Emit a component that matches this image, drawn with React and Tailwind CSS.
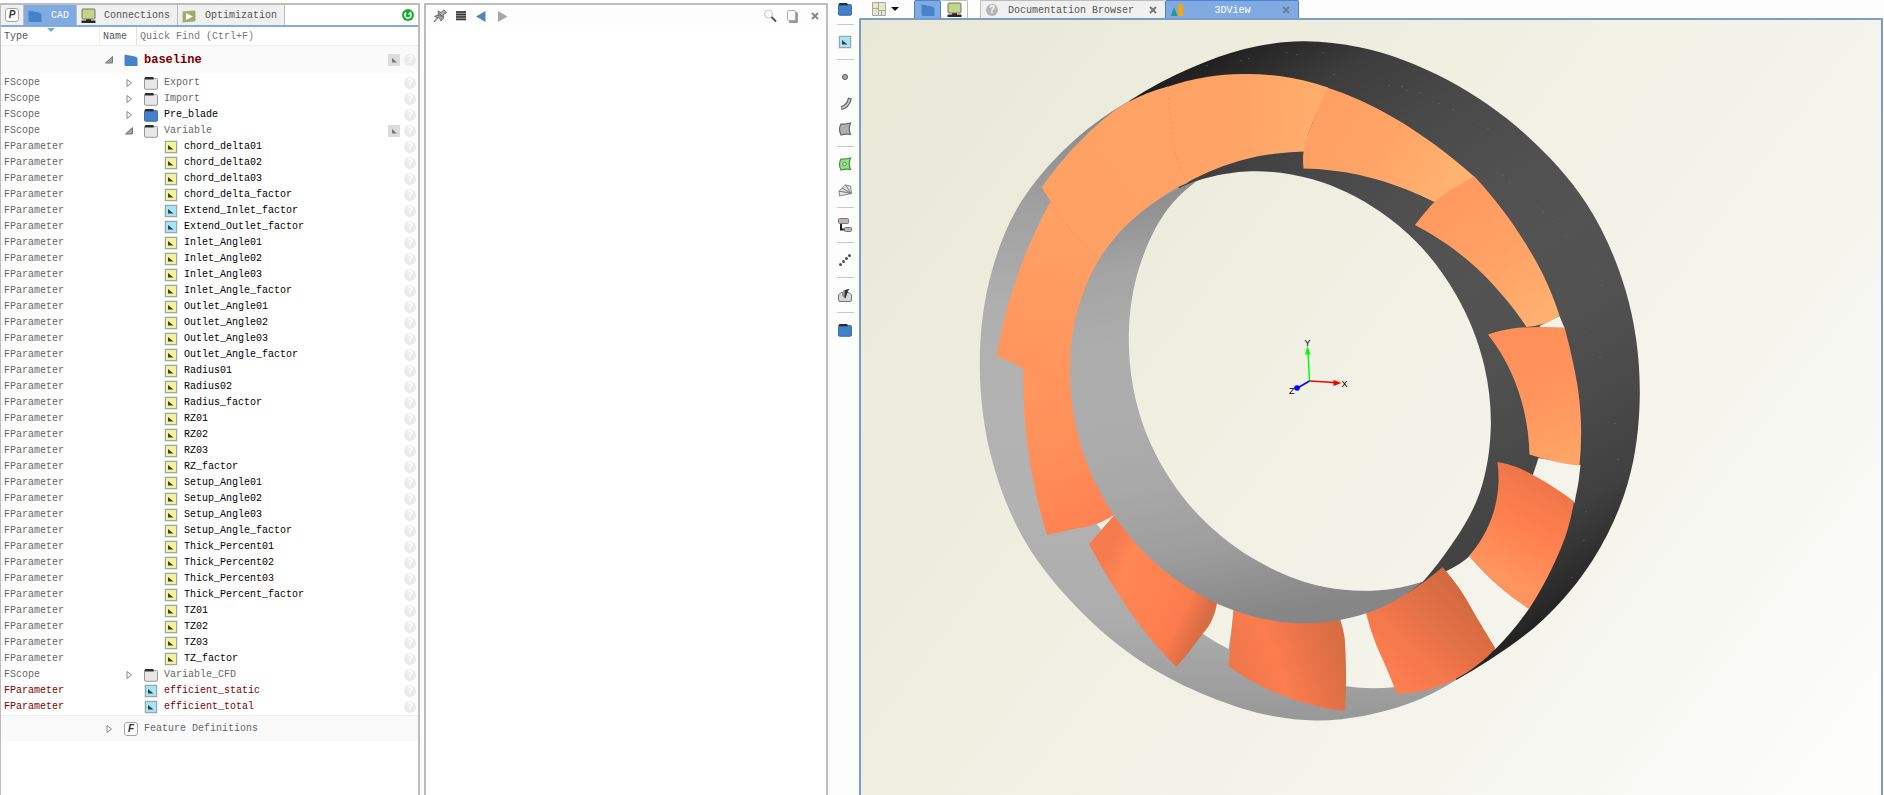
import React, { useState } from 'react'

const row = (name, level = 2, icon = 'yellow') => ({ type: 'FParameter', name, level, icon })
const scope = (name, icon = 'folder', open = false) => ({ type: 'FScope', name, level: 1, icon, open, arrow: true })

const rows = [
  scope('Export'),
  scope('Import'),
  scope('Pre_blade', 'blueFolder'),
  scope('Variable', 'folder', true),
  row('chord_delta01'),
  row('chord_delta02'),
  row('chord_delta03'),
  row('chord_delta_factor'),
  row('Extend_Inlet_factor', 2, 'blue'),
  row('Extend_Outlet_factor', 2, 'blue'),
  row('Inlet_Angle01'),
  row('Inlet_Angle02'),
  row('Inlet_Angle03'),
  row('Inlet_Angle_factor'),
  row('Outlet_Angle01'),
  row('Outlet_Angle02'),
  row('Outlet_Angle03'),
  row('Outlet_Angle_factor'),
  row('Radius01'),
  row('Radius02'),
  row('Radius_factor'),
  row('RZ01'),
  row('RZ02'),
  row('RZ03'),
  row('RZ_factor'),
  row('Setup_Angle01'),
  row('Setup_Angle02'),
  row('Setup_Angle03'),
  row('Setup_Angle_factor'),
  row('Thick_Percent01'),
  row('Thick_Percent02'),
  row('Thick_Percent03'),
  row('Thick_Percent_factor'),
  row('TZ01'),
  row('TZ02'),
  row('TZ03'),
  row('TZ_factor'),
  scope('Variable_CFD'),
  { ...row('efficient_static', 1, 'blue'), red: true },
  { ...row('efficient_total', 1, 'blue'), red: true },
]

/* ---------- icons ---------- */

const Svg = ({ size = 14, children }) => (
  <svg width={size} height={size} viewBox={`0 0 ${size} ${size}`} className="shrink-0" aria-hidden="true">{children}</svg>
)

const Letter = ({ letter }) => (
  <span className="flex h-[14px] w-[14px] shrink-0 items-center justify-center rounded-[3px] border border-[#a6a6a6] bg-white font-['Liberation_Sans'] text-[10px] font-bold italic leading-none text-[#333]">{letter}</span>
)

const CadIcon = () => (
  <Svg><path d="M0.5 1.5 L11 3.5 Q13.5 4 13.5 6 V13 H2 Q0.5 13 0.5 11.5Z" fill="#4682ca" /></Svg>
)

const Folder = ({ blue }) => (
  <Svg>
    <path d="M0.5 5 V2.5 L1.5 1 H9 L10.5 3 V5Z" fill="#2c2c2c" />
    <path d="M0.500 4.500 Q0.500 3.500 1.500 3.500 H9 L10.500 2.500 H12.500 Q13.500 2.500 13.500 3.500 V12 Q13.500 13.300 12 13.300 H2 Q0.500 13.300 0.500 12Z" fill={blue ? '#4380cb' : '#e8e8e8'} stroke={blue ? '#3768a5' : '#8c8c8c'} strokeWidth="0.900" />
  </Svg>
)

const Param = ({ color }) => (
  <Svg>
    <rect x="0" y="0" width="14" height="14" rx="1" fill="#e9e9e9" />
    <rect x="1.500" y="1.500" width="11" height="11" fill={color} stroke="#9aa8a4" />
    <path d="M4 5 L9.500 9.500 H4Z" fill="#3c3c3c" />
  </Svg>
)

const Monitor = () => (
  <Svg size={15}>
    <path d="M5 11 H10 V12.500 H14.500 V15 H0.500 V12.500 H5Z" fill="#2f2820" />
    <rect x="1" y="1" width="13" height="10" rx="1" fill="#c3d48c" stroke="#77785a" />
  </Svg>
)

const Play = () => (
  <Svg>
    <path d="M0.5 2.5 L12 1.5 Q13.5 1.5 13.5 3 V11 Q13.5 12.5 12 12.5 L0.5 13.5Z" fill="#a0ab6c" />
    <path d="M4 4 L11 7.5 L4 11Z" fill="#fff" />
  </Svg>
)

const Refresh = () => (
  <Svg size={12}>
    <circle cx="6" cy="6" r="6" fill="#12ad2b" />
    <path d="M4.200 3.600 A3 3 0 1 0 8.800 5.200" fill="none" stroke="#fff" strokeWidth="1.500" />
    <path d="M5.500 5.400 L9.800 5.600 L9 2.200Z" fill="#fff" />
  </Svg>
)

const Arrow = ({ open }) => (
  <Svg size={8}>
    {open
      ? <path d="M7.5 0.5 V7 H0.5Z" fill="#a0a0a0" stroke="#777" />
      : <path d="M2 0.5 L6.500 4 L2 7.5Z" fill="#fff" stroke="#888" />}
  </Svg>
)

const Help = () => (
  <span className="flex h-3 w-3 items-center justify-center rounded-full bg-[#ebebeb] font-['Liberation_Sans'] text-[10px] font-bold leading-none text-white">?</span>
)

const Mark = () => (
  <button type="button" aria-label="Options" className="flex h-3 w-3 items-center justify-center bg-[#dcdcdc]">
    <svg width="12" height="12" viewBox="0 0 12 12"><path d="M4 4 L9 8.5 H4Z" fill="#777" /></svg>
  </button>
)

const Cross = ({ color = '#777' }) => (
  <Svg size={8}><path d="M1 1 L7 7 M7 1 L1 7" stroke={color} strokeWidth="2" /></Svg>
)

const rowIcons = {
  folder: <Folder />,
  blueFolder: <Folder blue />,
  yellow: <Param color="#f4f59b" />,
  blue: <Param color="#a5e4fa" />,
}

/* ---------- object tree ---------- */

const treeTabs = [
  { label: 'CAD', icon: <CadIcon />, width: 'w-[53px]' },
  { label: 'Connections', icon: <Monitor />, width: 'w-[101px]' },
  { label: 'Optimization', icon: <Play />, width: 'w-[107px]' },
]

const TreeRow = ({ item }) => {
  const dim = item.icon === 'folder'
  return (
    <tr className="h-4">
      <td className={item.red ? 'pl-[3px] text-[#7d0000]' : 'pl-[3px] text-[#666]'}>{item.type}</td>
      <td>
        <div className={`flex h-4 items-center ${item.level === 2 ? 'pl-16' : 'pl-[25px]'}`}>
          {item.level === 1 && <span className="flex w-[19px] shrink-0">{item.arrow && <Arrow open={item.open} />}</span>}
          {rowIcons[item.icon]}
          <span className={`pl-[6px] ${item.red ? 'text-[#7d0000]' : dim ? 'text-[#666]' : 'text-black'}`}>{item.name}</span>
        </div>
      </td>
      <td>
        <div className="flex items-center justify-end gap-1 pr-[2px]">
          {item.open && <Mark />}
          <Help />
        </div>
      </td>
    </tr>
  )
}

const TreePanel = () => {
  const [find, setFind] = useState('')

  return (
    <section className="mt-[3px] flex w-[420px] shrink-0 flex-col border-2 border-b-0 border-l border-[#bdbdbd] bg-white">
      <nav className="flex h-[22px] items-stretch border-b-2 border-[#7fabe2]">
        <button type="button" aria-label="Project" className="flex w-[23px] items-center justify-center border-r border-[#bdbdbd] bg-[#f0f0f0]"><Letter letter="P" /></button>
        {treeTabs.map((tab, i) => (
          <button
            key={tab.label}
            type="button"
            className={`flex items-center justify-between border-r border-[#bdbdbd] pl-1 pr-[7px] pt-px ${tab.width} ${i === 0 ? 'bg-[#7fabe2] text-white' : 'bg-[#f0f0f0] text-[#555]'}`}
          >
            {tab.icon}
            {tab.label}
          </button>
        ))}
        <button type="button" aria-label="Refresh" className="ml-auto flex items-center pr-1"><Refresh /></button>
      </nav>

      <table className="w-full table-fixed border-separate border-spacing-0 text-left">
        <colgroup>
          <col className="w-[99px]" />
          <col />
          <col className="w-10" />
        </colgroup>
        <thead>
          <tr className="h-[19px]">
            <th className="relative border-b border-r border-[#ededed] pl-[3px] pt-px font-normal text-[#555]">
              Type
              <svg width="8" height="4" viewBox="0 0 8 4" className="absolute left-[46px] top-[1px]"><path d="M0 0 H8 L4 4Z" fill="#6cb0d8" /></svg>
            </th>
            <th colSpan="2" className="border-b border-[#ededed] font-normal text-[#555]">
              <div className="flex items-center">
                <span className="w-[37px] border-r border-[#e2e2e2] pl-[3px] pt-px leading-[17px]">Name</span>
                <input
                  type="search"
                  aria-label="Quick Find"
                  placeholder="Quick Find (Ctrl+F)"
                  className="min-w-0 flex-1 pl-[3px] pt-px outline-none placeholder:text-[#777]"
                  value={find}
                  onChange={(e) => setFind(e.target.value)}
                />
              </div>
            </th>
          </tr>
        </thead>
        <tbody>
          <tr className="h-[29px] [&>td]:border-b-2 [&>td]:border-white [&>td]:bg-[#fafafa]">
            <td></td>
            <td>
              <div className="flex items-center pl-[5px] pt-px">
                <span className="flex w-[19px] shrink-0"><Arrow open /></span>
                <CadIcon />
                <span className="pl-[6px] text-[12px] font-bold text-[#7d0000]">baseline</span>
              </div>
            </td>
            <td>
              <div className="flex items-center justify-end gap-1 pr-[2px] pt-px"><Mark /><Help /></div>
            </td>
          </tr>
          {rows.map((item) => <TreeRow key={item.name} item={item} />)}
          <tr className="h-[26px] [&>td]:border-t [&>td]:border-[#efefef] [&>td]:bg-[#fafafa]">
            <td></td>
            <td colSpan="2">
              <div className="flex items-center pl-[5px]">
                <span className="flex w-[19px] shrink-0"><Arrow /></span>
                <Letter letter="F" />
                <span className="pl-[6px] text-[#666]">Feature Definitions</span>
              </div>
            </td>
          </tr>
        </tbody>
      </table>
    </section>
  )
}

/* ---------- empty editor ---------- */

const EditorPanel = () => (
  <section className="ml-1 mt-[3px] w-[404px] shrink-0 border-2 border-b-0 border-[#bdbdbd] bg-white">
    <header className="flex h-[21px] items-center justify-between bg-[#fdfdfd] px-[7px]">
      <div className="flex items-center gap-2">
        <button type="button" aria-label="Pin">
          <Svg>
            <path d="M1 13 L5 8.5" stroke="#888" strokeWidth="1.5" />
            <path d="M5 2 L8 3.5 L11 0.8 L13.5 4 L10 5.8 L10.5 9 L8 12 L6.5 9 L1.5 7.5 L5.5 5.5Z" fill="#aaa" stroke="#666" strokeWidth="0.900" />
            <path d="M6 4.5 L10 8 M4.5 6.5 L9 7" stroke="#666" />
          </Svg>
        </button>
        <button type="button" aria-label="List">
          <Svg size={12}>
            <rect x="1" y="1" width="10" height="9" fill="#aaa" />
            <path d="M1 2 H11 M1 4.500 H11 M1 7 H11 M1 9.500 H11" stroke="#333" strokeWidth="1.500" />
          </Svg>
        </button>
        <button type="button" aria-label="Back"><Svg size={12}><path d="M10.5 1 V12 L1 6.5Z" fill="#5087b8" /></Svg></button>
        <button type="button" aria-label="Forward"><Svg size={14}><path d="M3 2 V13 L12.5 7.5Z" fill="#a8a8a8" /></Svg></button>
      </div>
      <div className="flex items-center gap-2">
        <button type="button" aria-label="Search">
          <Svg>
            <circle cx="5.500" cy="5" r="4" fill="#fafafa" stroke="#c4c4c4" />
            <path d="M8.500 8 L13 12.500" stroke="#555" strokeWidth="2" />
          </Svg>
        </button>
        <button type="button" aria-label="Copy">
          <Svg>
            <rect x="4" y="3" width="9" height="11" rx="1.5" fill="#999" />
            <rect x="2.5" y="1.5" width="8" height="10" rx="1.5" fill="#fff" stroke="#aaa" />
          </Svg>
        </button>
        <button type="button" aria-label="Close" className="pl-1"><Cross color="#888" /></button>
      </div>
    </header>
  </section>
)

/* ---------- vertical toolbar ---------- */

const toolGroups = [
  [['Parameter', <Param color="#a5e4fa" />]],
  [
    ['Point', <Svg><circle cx="7" cy="7" r="2.5" fill="#aaa" stroke="#555" /></Svg>],
    ['Curve', (
      <Svg>
        <path d="M3 12 Q10 11 12 2" fill="none" stroke="#666" strokeWidth="4" />
        <path d="M3.5 12 Q10 10.5 11.8 3" fill="none" stroke="#c4c4c4" strokeWidth="1.6" />
      </Svg>
    )],
    ['Surface', <Svg><path d="M3 2 Q8 2.500 12.500 1 Q10 7 12.500 12.500 Q8 11.500 3 13 Q0 7 3 2Z" fill="#b0b0b0" stroke="#666" strokeWidth="1.200" /></Svg>],
  ],
  [
    ['Image surface', (
      <Svg>
        <path d="M3 2 Q8 2.500 12.500 1 Q10 7 12.500 12.500 Q8 11.500 3 13 Q0 7 3 2Z" fill="#9edb8e" stroke="#38963a" strokeWidth="1.200" />
        <circle cx="6.500" cy="7" r="1.800" fill="#d8f3d2" stroke="#38963a" />
      </Svg>
    )],
    ['Solid', (
      <Svg>
        <path d="M1 8 L7.500 2 L12.500 3 L13.500 10.500 L1.500 13Z" fill="#e2e2e2" stroke="#888" />
        <path d="M1 8 L13 10.500 M4 5 L13 10.500 M7.500 2 L13 10.500" stroke="#777" />
      </Svg>
    )],
  ],
  [['Feature', (
    <Svg>
      <path d="M3 5 V11.5 H8" fill="none" stroke="#222" strokeWidth="2" />
      <rect x="0.5" y="0.5" width="10" height="5" rx="1" fill="#bdb5b5" stroke="#777" />
      <rect x="6.5" y="9.500" width="7" height="4" rx="1" fill="#bdb5b5" stroke="#777" />
    </Svg>
  )]],
  [['Points', (
    <Svg>
      <g fill="#505050">
        <circle cx="2.500" cy="11.5" r="1.500" /><circle cx="5.500" cy="8.500" r="1.500" /><circle cx="8.500" cy="5.500" r="1.500" /><circle cx="11.500" cy="2.500" r="1.500" />
      </g>
    </Svg>
  )]],
  [['Import', (
    <Svg>
      <path d="M0.5 7 L3 4.500 H11 L13.500 7 V12 Q13.500 13.500 12 13.500 H2 Q0.5 13.500 0.5 12Z" fill="#d6d6d6" stroke="#777" />
      <path d="M4 7 Q4 1 11.500 1 Q9 4 9 6 L7.500 10.500Z" fill="#333" />
      <path d="M4 7 Q4 2.500 7 2 L6.500 9Z" fill="#999" />
    </Svg>
  )]],
  [['Scope', <Folder blue />]],
]

const Toolbar = () => (
  <aside className="flex w-[31px] shrink-0 flex-col items-center bg-[#fdfdfd] pl-[3px]">
    <div className="flex h-6 w-[17px] justify-center pt-[2px]">
      <button type="button" aria-label="New scope" className="flex h-[14px]"><Folder blue /></button>
    </div>
    {toolGroups.map((group) => (
      <div key={group[0][0]} className="flex w-[17px] flex-col items-center border-t border-[#cacaca] py-1">
        {group.map(([label, icon]) => (
          <button key={label} type="button" aria-label={label} className="flex h-[26px] items-center">{icon}</button>
        ))}
      </div>
    ))}
  </aside>
)

/* ---------- 3D scene ---------- */

// Smooth line through the points, as cubic Beziers. Tangents are weighted by
// the distance between points, so uneven spacing does not make it wobble.
const curve = (p) => {
  const n = p.length - 1
  const len = []
  for (let i = 0; i < n; i++) len.push(Math.hypot(p[i + 1][0] - p[i][0], p[i + 1][1] - p[i][1]) || 1)
  const unit = (i, k) => (p[i + 1][k] - p[i][k]) / len[i]

  const t = p.map((_, i) => [0, 1].map((k) => {
    if (i === 0 || i === n) return 0
    return (unit(i - 1, k) * len[i] + unit(i, k) * len[i - 1]) / (len[i] + len[i - 1])
  }))
  const ends = n > 1
  t[0] = [0, 1].map((k) => (ends ? 2 * unit(0, k) - t[1][k] : unit(0, k)))
  t[n] = [0, 1].map((k) => (ends ? 2 * unit(n - 1, k) - t[n - 1][k] : unit(n - 1, k)))

  let d = ''
  for (let i = 0; i < n; i++) {
    const h = len[i] / 3
    const [a, b] = [p[i], p[i + 1]]
    d += `C${a[0] + t[i][0] * h} ${a[1] + t[i][1] * h} ${b[0] - t[i + 1][0] * h} ${b[1] - t[i + 1][1] * h} ${b[0]} ${b[1]}`
  }
  return d
}

// Closed shape made of smooth edges with corners between them
const shape = (...edges) => `M${edges[0][0]}` + edges.map((e) => `L${e[0]}` + curve(e)).join('') + 'Z'

const darkRim = [[1130, 100.7], [1193, 67.3], [1245, 49], [1303, 41.3], [1360, 47.3], [1446.7, 79.3], [1526.7, 135], [1586.7, 203.3], [1626, 290], [1640.3, 395], [1628.3, 483.3], [1593.3, 560], [1543.3, 620], [1490, 660], [1456.7, 680]]
const greyRim = [[1456.7, 680], [1410, 703.3], [1366, 715.5], [1316, 720.5], [1273, 716], [1210, 696.7], [1143.3, 662.5], [1076.7, 606.7], [1026.7, 543.3], [991.7, 456.7], [980.3, 368], [990, 280], [1016.7, 210], [1063.3, 151], [1130, 100.7]]
const hubRim = [[1196, 181], [1147, 208], [1100, 258.7], [1075, 323.3], [1071, 387], [1085, 456.7], [1133.3, 540], [1186.7, 586.7], [1233.3, 610], [1293.3, 623], [1340.7, 620], [1380, 608.3], [1423, 582]]
const holeDark = [[1197, 181], [1253.3, 171.3], [1313, 179.3], [1380, 211.3], [1416.7, 241.7], [1456.7, 295], [1485, 366.7], [1491.3, 427], [1480, 493.3], [1443.3, 557], [1423, 582]]
const holeGrey = [[1423, 582], [1393, 588.7], [1326.7, 587.3], [1253.3, 558.3], [1190, 505], [1146.7, 433.3], [1129.3, 340], [1140, 266.7], [1173, 203.3], [1197, 181]]

const gaps = [
  'M1540 326L1560 316L1565 328L1542 328Z',
  'M1539 458L1581 465L1579 482L1575 503L1533 476Z',
  'M1445 572Q1462 564 1470 556L1495 580L1530 608Q1514 631 1495 650L1466 600Z',
  'M1340 618L1368 612L1378 643L1396 687Q1370 690 1345 686L1345 653Z',
  'M1217 602L1235 609L1229 649Q1215 642 1202 633Z',
  'M1097 524L1116 514L1102 530Z',
]

const blades = [
  // left side, below the first overlap
  { fill: 'bladeJ', d: shape([[1024, 366], [1027, 437], [1035, 487], [1047.5, 535]], [[1047.5, 535], [1070, 530], [1098, 523.5], [1116, 514]], [[1116, 514], [1090, 384]]) },
  { fill: 'bladeK', d: shape([[1053, 198], [1032, 240], [1013, 290], [997, 356]], [[997, 356], [1023, 368], [1047, 380], [1071, 384]], [[1090, 384], [1112, 256]]) },
  // bottom
  { fill: 'bladeI', d: shape([[1115, 515], [1130, 500], [1217.5, 603]], [[1217.5, 603], [1211, 623], [1200, 638], [1177, 667]], [[1177, 667], [1140, 625], [1110, 580], [1089.5, 544]]) },
  { fill: 'bladeH', d: shape([[1234, 609], [1340.5, 619]], [[1340.5, 619], [1345, 637], [1346, 653], [1345.5, 711]], [[1345.5, 711], [1313, 705], [1277, 693], [1247, 678], [1229, 666]]) },
  { fill: 'bladeG', d: shape([[1443, 567], [1463, 593], [1477, 617], [1496, 648.5]], [[1496, 648.5], [1457, 678.5], [1427, 690], [1397.5, 694]], [[1397.5, 694], [1386.5, 667], [1376, 643], [1366.5, 613]], [[1366.5, 613], [1403, 596], [1443, 567]]) },
  // right side
  { fill: 'bladeF', d: shape([[1498, 462], [1517, 467], [1537, 477], [1574.5, 501.5]], [[1574.5, 501.5], [1568, 530], [1553, 567], [1529.5, 609]], [[1529.5, 609], [1500, 587], [1469.5, 556]], [[1469.5, 556], [1487, 530], [1497, 500], [1498, 462]]) },
  { fill: 'bladeE', d: shape([[1488.5, 334.5], [1510, 329], [1540, 327], [1565, 327.5]], [[1565, 327.5], [1573, 360], [1579, 393], [1581.5, 425], [1580, 465.5]], [[1580, 465.5], [1553, 461], [1530, 454.5]], [[1530, 454.5], [1521.7, 400], [1508, 365], [1488.5, 334.5]]) },
  { fill: 'bladeD', d: shape([[1474.5, 176], [1527, 245], [1547, 282], [1560, 315.5]], [[1560, 315.5], [1543, 324], [1527, 327]], [[1527, 327], [1507, 300], [1477, 268], [1447, 244], [1415.5, 225]], [[1415.5, 225], [1425, 213], [1437, 200], [1474.5, 176]]) },
  { fill: 'bladeC', d: shape([[1326, 87], [1360, 100], [1393, 117], [1433, 143], [1474.5, 176.5]], [[1474.5, 176.5], [1450, 191], [1435, 202]], [[1435, 202], [1407, 189.5], [1360, 175], [1304, 168.5]], [[1304, 168.5], [1305, 145], [1313, 123], [1326, 87]]) },
  // top
  { fill: 'bladeB', d: shape([[1166, 87.500], [1207, 77], [1243, 74], [1280, 76], [1328.5, 87.5]], [[1328.5, 87.5], [1313, 123], [1306, 143], [1304.5, 151.5]], [[1304.5, 151.5], [1277, 153.5], [1247, 159], [1187, 183]], [[1183, 184], [1160, 113], [1166, 87.500]]) },
  { fill: 'bladeA', d: shape([[1042, 187.5], [1060, 164], [1086.7, 135], [1127, 103], [1168.5, 86.5]], [[1168.5, 86.5], [1170, 113], [1175, 150], [1188, 183]], [[1188, 183], [1160, 199], [1130, 240], [1102, 262]], [[1100, 259], [1077, 237], [1051, 201], [1042, 187.5]]) },
]

// id, x1, y1, x2, y2, stops
const gradients = [
  ['scene', 861, 20, 1882, 795, ['#e9e8d7', '#eeeee0', '#f4f4ec', '#fdfdfc']],
  ['dark', 1140, 98, 1480, 660, ['#1f1f1f', '#3d3d3d', '#494949', '#505050', '#535353', '#515151', '#4a4a4a', '#404040', '#242424']],
  ['rim', 1100, 100, 1100, 720, ['#858585', '#a0a0a0', '#afafaf', '#b3b3b3', '#b2b2b2', '#adadad', '#989898']],
  ['hub', 1150, 190, 1230, 620, ['#8c8c8c', '#a4a4a4', '#adadad', '#adadad', '#a8a8a8', '#9d9d9d', '#868686']],
  ['bladeA', 1040, 200, 1180, 100, ['#ffa064', '#ffa366']],
  ['bladeB', 1170, 120, 1320, 130, ['#ffa265', '#ffa467', '#ffad6d']],
  ['bladeC', 1310, 110, 1440, 200, ['#ff9f63', '#ffa366', '#ffb271']],
  ['bladeD', 1440, 200, 1540, 320, ['#ff9960', '#ffa165', '#ffb070']],
  ['bladeE', 1510, 330, 1560, 460, ['#ff8f5a', '#ff945d', '#ffa366']],
  ['bladeF', 1550, 480, 1500, 575, ['#ee7549', '#ff804f', '#ff955e']],
  ['bladeG', 1475, 590, 1390, 680, ['#cf6840', '#df6e44', '#f3784b', '#ff7e50']],
  ['bladeH', 1340, 630, 1240, 665, ['#d76c43', '#e97348', '#fd7d4f', '#f0774a']],
  ['bladeI', 1215, 600, 1110, 550, ['#da6c43', '#fa7b4e', '#ff8050', '#ff8352', '#ff8855', '#f67b4e']],
  ['bladeJ', 1030, 380, 1090, 520, ['#ff955d', '#ff8f5a', '#ff8252']],
  ['bladeK', 1060, 220, 1030, 370, ['#ffa064', '#ff9a60', '#ff955d']],
]

const specks = [[1207, 65], [1241, 60], [1249, 58], [1287, 52], [1297, 54], [1323, 52], [1334, 74], [1389, 85], [1402, 86], [1407, 90], [1420, 92], [1439, 103], [1453, 109], [1480, 123], [1488, 128], [1503, 175], [1510, 182], [1538, 206], [1543, 211], [1553, 221], [1566, 236], [1594, 269], [1602, 285], [1586, 332], [1600, 357], [1615, 423], [1618, 459], [1586, 511], [1584, 540], [1572, 577]]

const Scene = () => (
  <svg viewBox="861 20 1021 775" preserveAspectRatio="xMidYMid slice" className="h-full w-full" role="img" aria-label="3D view of the blade ring">
    <defs>
      {gradients.map(([id, x1, y1, x2, y2, stops]) => (
        <linearGradient key={id} id={id} gradientUnits="userSpaceOnUse" x1={x1} y1={y1} x2={x2} y2={y2}>
          {stops.map((color, i) => <stop key={i} offset={i / (stops.length - 1)} stopColor={color} />)}
        </linearGradient>
      ))}
    </defs>
    <rect x="0" y="-500" width="3000" height="2000" fill="url(#scene)" />
    <path d={shape(greyRim)} fill="url(#rim)" />
    <path d={shape(darkRim)} fill="url(#dark)" />
    {gaps.map((d) => <path key={d} d={d} fill="url(#scene)" />)}
    {blades.map((blade) => <path key={blade.fill} d={blade.d} fill={`url(#${blade.fill})`} />)}
    <path d={shape(hubRim, holeGrey)} fill="url(#hub)" />
    <path d={shape(holeDark, holeGrey)} fill="url(#scene)" />

    {/* blade joints */}
    <g fill="none" stroke="#fa9159" strokeWidth="0.6">
      <path d={'M1168.5 87' + curve([[1168.5, 87], [1170, 113], [1175, 150], [1188, 183]])} strokeDasharray="3 2" />
      <path d={'M1051 201' + curve([[1051, 201], [1077, 237], [1100, 259]])} />
      <path d={'M1023 368' + curve([[1023, 368], [1047, 380], [1070, 384]])} />
    </g>
    {specks.map(([x, y], i) => <rect key={i} x={x} y={y} width="1" height="1" fill={i % 2 ? '#805b4a' : '#6c6c6c'} />)}

    {/* axes */}
    <g strokeWidth="1.5" fontFamily="Liberation Sans, sans-serif" fontSize="9">
      <path d="M1310 381 L1308.5 352" stroke="#0f0" />
      <path d="M1308 346 L1311 354.5 H1305.5Z" fill="#0f0" />
      <path d="M1310 381 L1335 382.5" stroke="#f00" />
      <path d="M1342 383 L1334 380 V386Z" fill="#f00" />
      <path d="M1310 381 L1298 388" stroke="#00f" />
      <circle cx="1297.5" cy="388" r="2.8" fill="#00f" />
      <text x="1305" y="346">Y</text>
      <text x="1342" y="386.5">X</text>
      <text x="1289.5" y="394">Z</text>
    </g>
  </svg>
)

const ViewPanel = () => (
  <main className="mr-px flex min-w-0 flex-1 flex-col bg-[#fdfdfd]">
    <nav className="flex h-[18px] items-stretch">
      <button type="button" aria-label="Layout" className="flex w-[55px] items-center gap-[5px] pl-[13px]">
        <Svg>
          <rect x="0" y="0" width="14" height="14" rx="1" fill="#a9a998" />
          <path d="M1 1 H6 V6 H1Z M7 1 H13 V8 H7Z M1 7 H6 V13 H1Z M7 9 H9 V13 H7Z M10 9 H13 V13 H10Z" fill="#e4e6cf" />
        </Svg>
        <Svg size={8}><path d="M0 2 H8 L4 6Z" fill="#111" /></Svg>
      </button>
      <button type="button" aria-label="CAD" className="flex w-[27px] items-center justify-center rounded-t-[2px] border border-b-0 border-[#4d84c9] bg-[#7fabe2]"><CadIcon /></button>
      <button type="button" aria-label="Connections" className="flex w-[27px] items-center justify-center rounded-t-[2px] border border-b-0 border-l-0 border-[#bdbdbd] bg-white"><Monitor /></button>
      <button type="button" className="ml-[12px] flex w-[185px] items-center rounded-t-[2px] border border-b-0 border-r-0 border-[#bdbdbd] bg-[#f0f0f0] pl-[5px] pr-2 text-[#555]">
        <span className="flex h-3 w-3 items-center justify-center rounded-full bg-[#b5b5b5] font-['Liberation_Sans'] text-[10px] font-bold leading-none text-white">?</span>
        <span className="mr-auto pl-[10px] pt-[3px]">Documentation Browser</span>
        <Cross />
      </button>
      <button type="button" className="flex w-[134px] items-center justify-between rounded-t-[2px] border border-b-0 border-[#4d84c9] bg-[#7fabe2] pl-[5px] pr-2 text-white">
        <Svg size={12}>
          <path d="M3 3 L6.5 12 H0Z" fill="#229c86" />
          <rect x="7" y="0" width="5" height="12" fill="#fba50e" />
        </Svg>
        <span className="pt-[3px]">3DView</span>
        <Cross color="#6f7f93" />
      </button>
    </nav>
    <div className="min-h-0 flex-1 overflow-hidden rounded-t-[2px] border-2 border-b-0 border-[#7a9ccb]">
      <Scene />
    </div>
  </main>
)

const App = () => (
  <div className="flex h-screen overflow-hidden bg-[#fdfdfd] font-['Liberation_Mono',monospace] text-[10px] leading-4">
    <TreePanel />
    <EditorPanel />
    <Toolbar />
    <ViewPanel />
  </div>
)

export default App
